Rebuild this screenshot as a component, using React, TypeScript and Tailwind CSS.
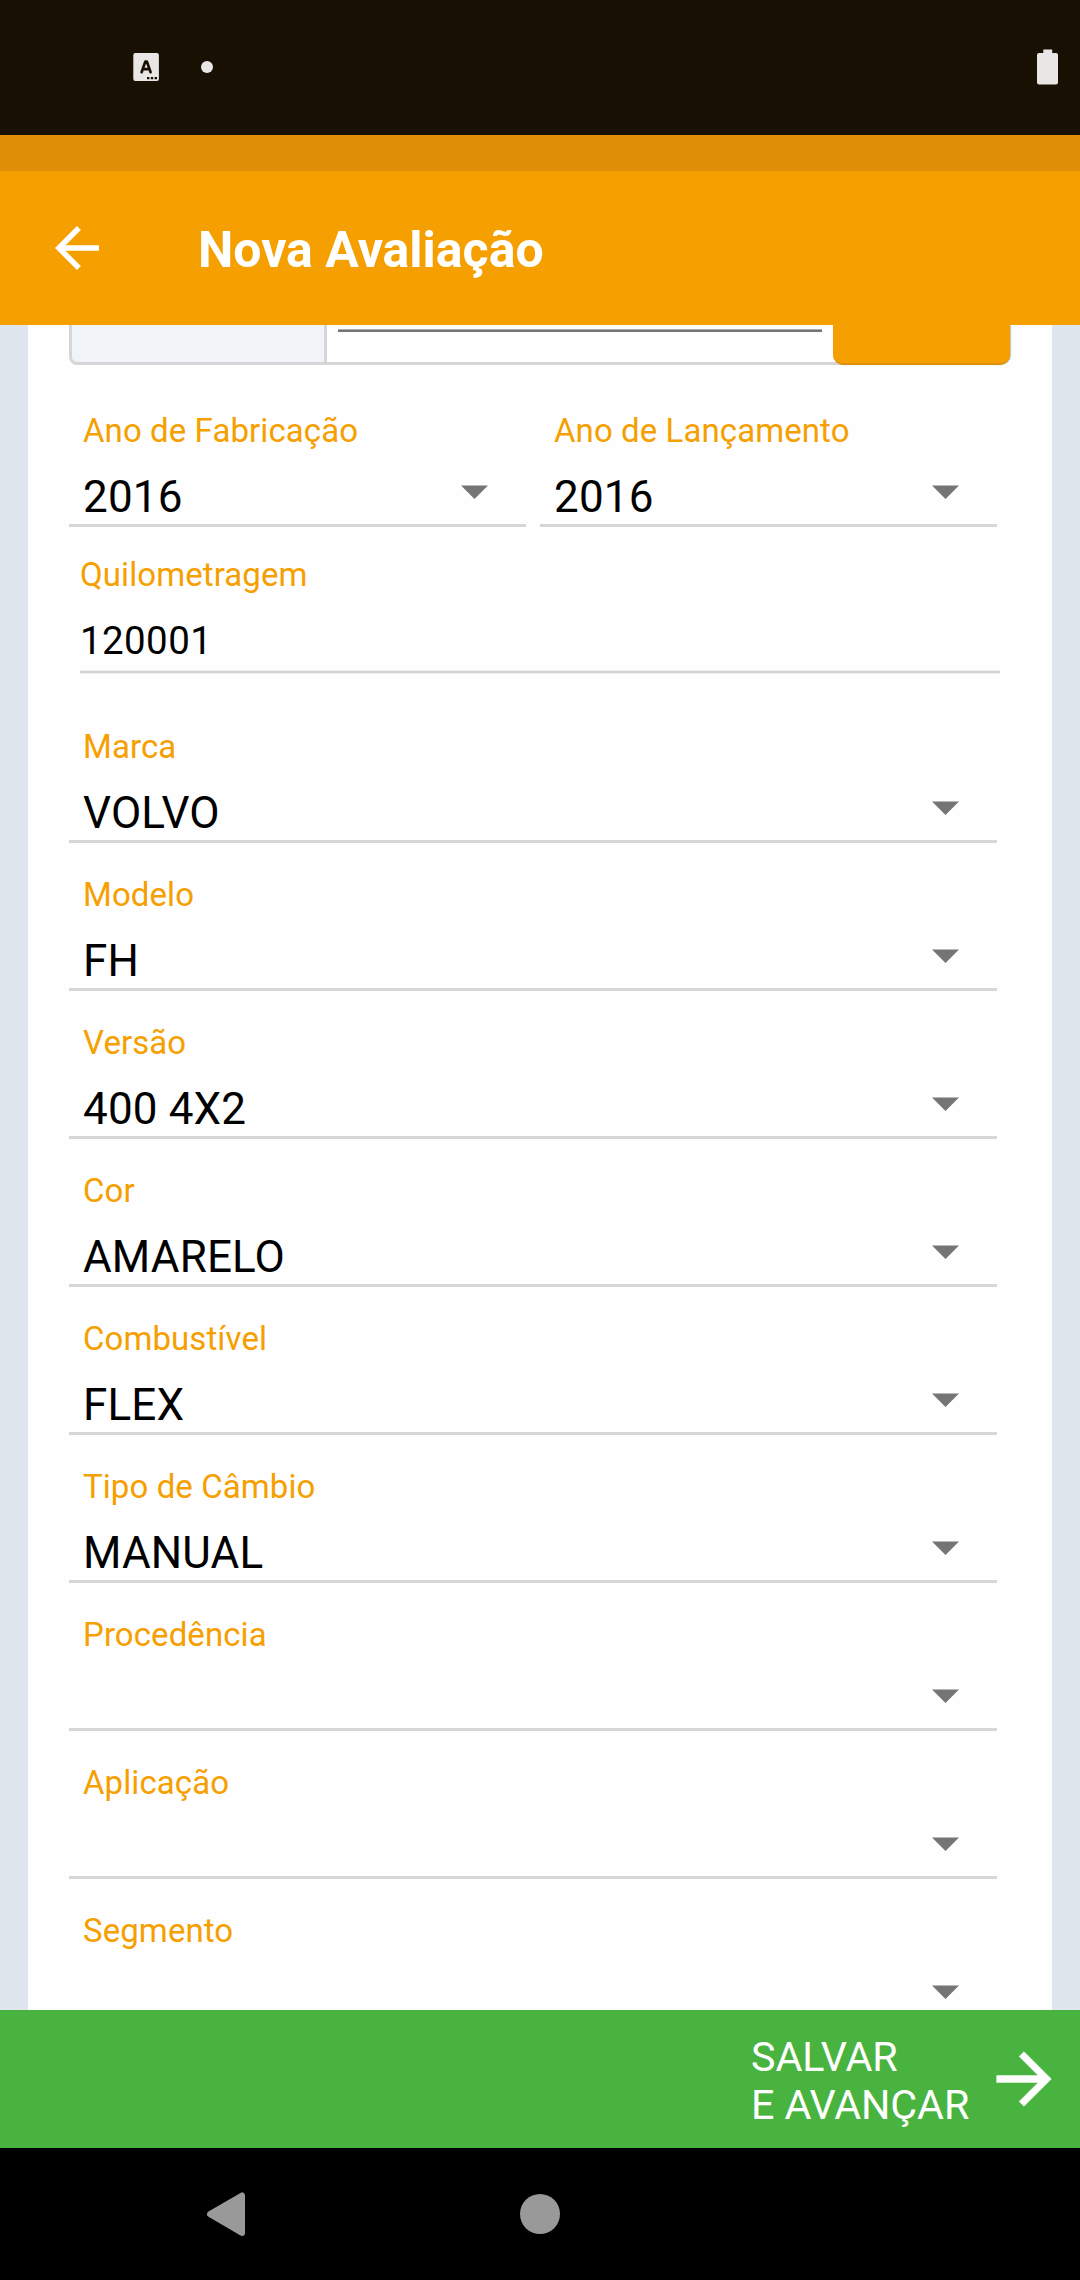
type FieldProps = { label: string; value?: string };

function SelectField({ label, value }: FieldProps) {
  return (
    <div className="flex h-[148px] min-w-0 shrink-0 flex-col border-b-[3px] border-[#d6d6d6] pt-8 pl-3.5">
      <label className="h-[39px] text-[33px] leading-[39px] tracking-[0.08px] text-[#f5a000]">{label}</label>
      <div className="mt-[21px] flex h-[52px] items-start justify-between pr-[38px]">
        <span className="text-[44px] leading-[52px] tracking-[0.15px] text-black">{value}</span>
        <svg className="mt-3.5 h-3.5 w-[27px]" viewBox="0 0 27 14" fill="#757575">
          <path d="M0 .4H27L13.5 14Z" />
        </svg>
      </div>
    </div>
  );
}

const fields: FieldProps[] = [
  { label: "Marca", value: "VOLVO" },
  { label: "Modelo", value: "FH" },
  { label: "Versão", value: "400 4X2" },
  { label: "Cor", value: "AMARELO" },
  { label: "Combustível", value: "FLEX" },
  { label: "Tipo de Câmbio", value: "MANUAL" },
  { label: "Procedência" },
  { label: "Aplicação" },
  { label: "Segmento" },
];

function StatusBar() {
  return (
    <div className="flex h-[135px] items-start justify-between bg-[#171003] pr-[22px] pl-[133px]">
      <div className="flex items-center gap-[42px] pt-[53px]">
        <svg className="h-7 w-[26px]" viewBox="0 0 26 28">
          <rect x=".3" width="25.6" height="28" rx="2" fill="#e8e7e5" />
          <path d="M8.6 19.2 12.3 8.6H13.9L17.6 19.2M10 16.2H16.2" fill="none" stroke="#171003" strokeWidth="2.7" strokeLinecap="round" strokeLinejoin="round" />
          <path d="M14 24h2.4v2.2H14zM17.8 24h2.4v2.2h-2.4zM21.6 24H24v2.2h-2.4z" fill="#171003" />
        </svg>
        <span className="size-3 rounded-full bg-[#e8e7e5]" />
      </div>
      <svg className="mt-[49px] h-9 w-[21px]" viewBox="0 0 21 36" fill="#e8e7e5">
        <path d="M6.3.4H15.2V4H19Q21 4 21 6V33.6Q21 35.6 19 35.6H2Q0 35.6 0 33.6V6Q0 4 2 4H6.3Z" />
      </svg>
    </div>
  );
}

export default function App() {
  return (
    <div className="flex h-[2280px] w-[1080px] flex-col overflow-hidden bg-[#dfe6ee] font-[Roboto,sans-serif]">
      <StatusBar />
      <div className="h-9 bg-[#df9008]" />
      <header className="flex h-[154px] items-center bg-[#f5a000] pl-11">
        <svg className="size-[66px]" viewBox="0 0 24 24" fill="white">
          <path d="M20 11H7.83l5.59-5.59L12 4l-8 8 8 8 1.41-1.41L7.83 13H20v-2z" />
        </svg>
        <h1 className="mt-[3px] ml-[88px] text-[50px] leading-[58px] font-bold text-white">Nova Avaliação</h1>
      </header>

      <main className="mx-7 h-[1685px] overflow-hidden bg-[#fefefe] pr-[42px] pl-[41px]">
        <div className="flex h-10 w-[941px]">
          <div className="h-10 w-[258px] shrink-0 rounded-bl-[8px] border-r-[3px] border-b-[3px] border-l-[3px] border-[#d6d6d6] bg-[#f0f4f8]" />
          <div className="h-10 w-[518px] shrink-0 border-b-[3px] border-[#d6d6d6] pt-1 pr-[23px] pl-[11px]">
            <div className="h-[3px] border-t border-[#a8a8a8] bg-[#757575]" />
          </div>
          <div className="relative -ml-3 h-10 w-[177px] shrink-0 rounded-b-[10px] border-b-2 border-[#df9008] bg-[#f5a000] shadow-[1px_0_1px_#00000040]" />
        </div>

        <div className="mt-3.5 grid w-[928px] grid-cols-2 gap-3.5">
          <SelectField label="Ano de Fabricação" value="2016" />
          <SelectField label="Ano de Lançamento" value="2016" />
        </div>

        <div className="ml-[11px] flex h-[168px] w-[920px] flex-col pt-7">
          <label className="h-[39px] text-[33px] leading-[39px] tracking-[0.08px] text-[#f5a000]">Quilometragem</label>
          <span className="mt-6 h-[45px] text-[38.5px] leading-[45px] tracking-[0.4px] text-black">120001</span>
          <div className="mt-[7px] h-1 border-y border-[#eeeeee] bg-[#d3d3d3]" />
        </div>

        <div className="flex w-[928px] flex-col">
          {fields.map((field) => (
            <SelectField key={field.label} {...field} />
          ))}
        </div>
      </main>

      <footer className="flex h-[138px] items-center justify-end bg-[#48b33e] pr-[15px]">
        <span className="mt-[3px] mr-4 w-[216px] text-[41.25px] leading-[48px] tracking-[-0.1px] whitespace-nowrap text-white">
          SALVAR
          <br />E AVANÇAR
        </span>
        <svg className="size-[82px]" viewBox="0 0 24 24" fill="white" stroke="white" strokeWidth=".15">
          <path d="M12 4l-1.41 1.41L16.17 11H4v2h12.17l-5.58 5.59L12 20l8-8z" />
        </svg>
      </footer>

      <nav className="flex h-[132px] items-center bg-black pl-[206px]">
        <svg className="h-[46px] w-10" viewBox="0 0 40 46" fill="#999999" stroke="#999999" strokeWidth="6" strokeLinejoin="round">
          <path d="M36 4.5V42L4 23.2Z" />
        </svg>
        <span className="ml-[274px] size-10 rounded-full bg-[#999999]" />
      </nav>
    </div>
  );
}
